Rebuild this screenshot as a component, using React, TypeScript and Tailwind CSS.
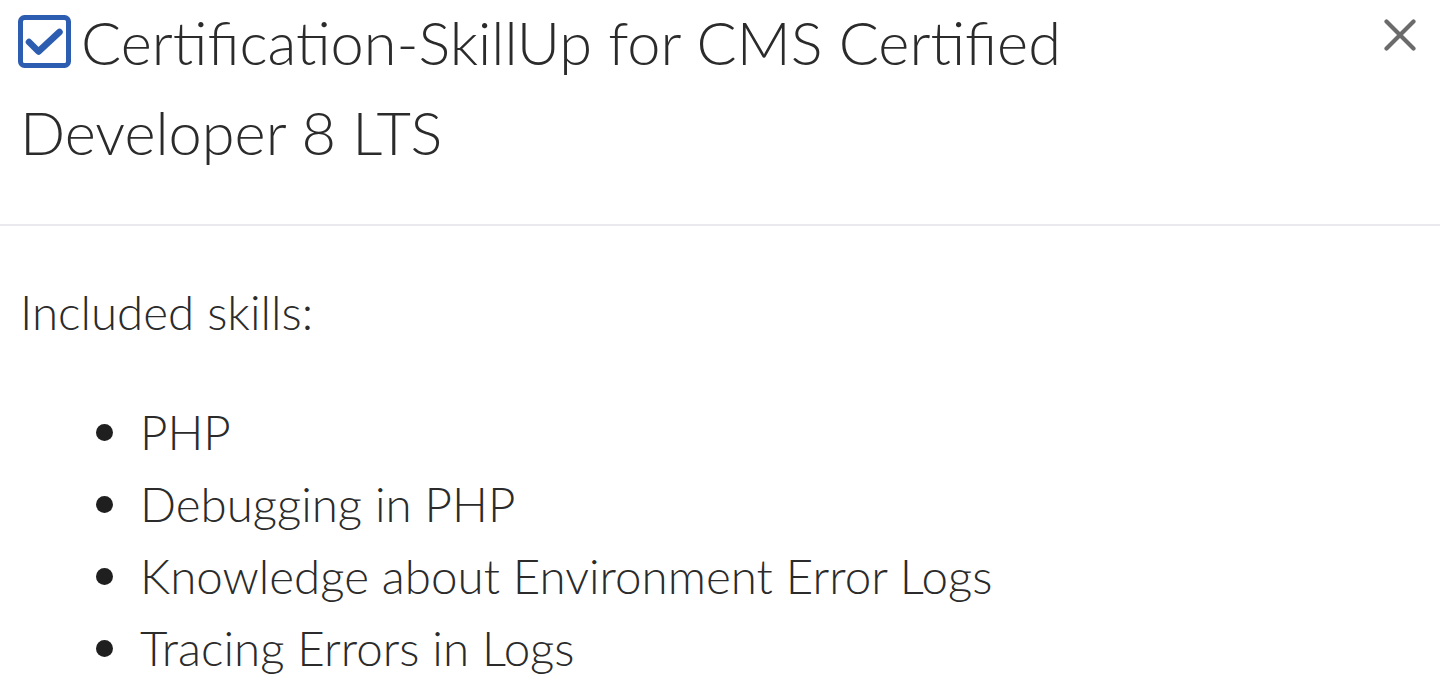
import React from "react";

export default function App() {
  return (
    <div className="min-h-[691px] w-full bg-white text-[#2b2b2b]" style={{ fontFamily: "Lato, 'Open Sans', sans-serif" }}>
      <div className="flex items-start justify-between border-b-[2px] border-[#e9e9ee] pl-[18px] pr-[24px] pb-[47px]">
        <h1 className="-mt-[3px] m-0 text-[59.5px] leading-[90px] font-light text-[#2b2b2b]">
          <svg
            width="53"
            height="53"
            viewBox="0 0 53 53"
            className="mr-[10px] inline-block align-[-3px]"
          >
            <rect x="2.5" y="2.5" width="48" height="48" rx="4" fill="none" stroke="#2c5db0" strokeWidth="5" />
            <path d="M11 27 L20.5 36.5 L41.5 17" fill="none" stroke="#2c5db0" strokeWidth="6.5" strokeLinecap="round" strokeLinejoin="round" />
          </svg>
          Certification-SkillUp for CMS Certified
          <br />
          <span className="ml-[2px]">Developer 8 LTS</span>
        </h1>
        <button className="mt-[19px]" aria-label="Close">
          <svg width="32" height="32" viewBox="0 0 32 32">
            <path d="M2.5 2.5 L29.5 29.5 M29.5 2.5 L2.5 29.5" stroke="#6b6b6b" strokeWidth="4.2" strokeLinecap="round" />
          </svg>
        </button>
      </div>
      <div className="px-[20px] pt-[50px] text-[47.5px] leading-[72px] font-light text-[#2b2b2b]">
        <p className="m-0">Included skills:</p>
        <ul className="mt-[48px] list-none pl-[76px]">
          {["PHP", "Debugging in PHP", "Knowledge about Environment Error Logs", "Tracing Errors in Logs"].map((s) => (
            <li key={s} className="flex items-center gap-[27px]">
              <span className="inline-block h-[17px] w-[17px] shrink-0 rounded-full bg-[#1f1f1f]" />
              <span>{s}</span>
            </li>
          ))}
        </ul>
      </div>
    </div>
  );
}
